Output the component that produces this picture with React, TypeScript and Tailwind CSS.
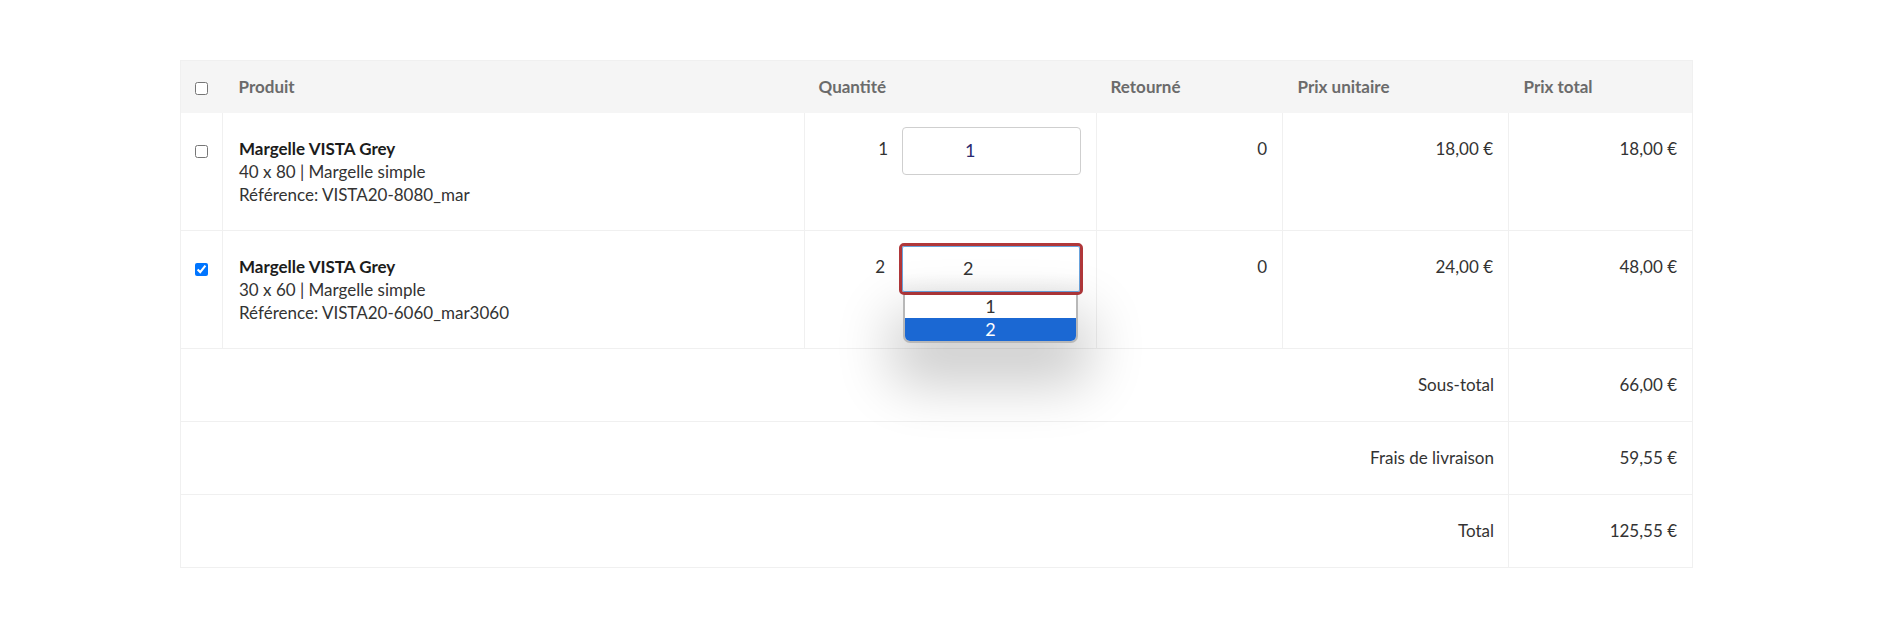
import React from 'react'

interface Line {
  id: string
  title: string
  dims: string
  reference: string
  qty: number
  returned: number
  unit: string
  total: string
  checked: boolean
}

const lines: Line[] = [
  { id: 'a', title: 'Margelle VISTA Grey', dims: '40 x 80 | Margelle simple', reference: 'Référence: VISTA20-8080_mar', qty: 1, returned: 0, unit: '18,00 €', total: '18,00 €', checked: false },
  { id: 'b', title: 'Margelle VISTA Grey', dims: '30 x 60 | Margelle simple', reference: 'Référence: VISTA20-6060_mar3060', qty: 2, returned: 0, unit: '24,00 €', total: '48,00 €', checked: true },
]

const totals = [
  { label: 'Sous-total', value: '66,00 €' },
  { label: 'Frais de livraison', value: '59,55 €' },
  { label: 'Total', value: '125,55 €' },
]

export default function App() {
  return (
    <main className="min-h-screen bg-white pt-[60px] px-[180px] text-[#222] font-['Lato',sans-serif]">
      <table className="w-[1512px] table-fixed border-collapse border border-[#f0f0f0] text-[17px]">
        <colgroup>
          <col className="w-[42px]" />
          <col className="w-[582px]" />
          <col className="w-[292px]" />
          <col className="w-[186px]" />
          <col className="w-[226px]" />
          <col className="w-[184px]" />
        </colgroup>
        <thead>
          <tr className="bg-[#f5f5f5] h-[52px] text-left text-[#6b6b6b] font-bold">
            <th className="text-center align-middle">
              <input type="checkbox" className="w-[13px] h-[13px] align-middle" />
            </th>
            <th className="px-4 font-bold">Produit</th>
            <th className="px-[14px] font-bold">Quantité</th>
            <th className="px-[14px] font-bold">Retourné</th>
            <th className="px-[15px] font-bold">Prix unitaire</th>
            <th className="px-[15px] font-bold">Prix total</th>
          </tr>
        </thead>
        <tbody>
          {lines.map(line => (
            <tr key={line.id} className="border-b border-[#f0f0f0] align-top">
              <td className="border-r border-[#f0f0f0] text-center pt-[26px]">
                <input type="checkbox" defaultChecked={line.checked} className="w-[13px] h-[13px]" />
              </td>
              <td className="border-r border-[#f0f0f0] px-4 py-6 leading-[23px]">
                <div className="font-bold text-[#1c1c1c]">{line.title}</div>
                <div className="text-[#333]">{line.dims}</div>
                <div className="text-[#333]">{line.reference}</div>
              </td>
              <td className="border-r border-[#f0f0f0] pl-3 pr-[15px] pt-[14px]">
                <div className="flex justify-end gap-[14px]">
                  <span className="leading-[23px] mt-[10px] text-[#333]">{line.qty}</span>
                  {line.checked ? (
                    <div className="relative">
                      <div className="w-[184px] h-[52px] -mt-[2px] -mr-[2px] rounded-[5px] border-[3px] border-[#b0373a] bg-white">
                        <div className="h-full rounded-[2px] border border-[#6aa3dc] bg-gradient-to-b from-white from-60% to-[#f3f3f3] pl-[60px] flex items-center text-[18px] text-[#333]">
                          {line.qty}
                        </div>
                      </div>
                      <div className="absolute left-[4px] top-[50px] w-[175px] rounded-b-[7px] border-2 border-t-0 border-[#b8b8b8] bg-white overflow-hidden shadow-[0_30px_55px_12px_rgba(0,0,0,0.2)] text-[18px] leading-[23px] text-center">
                        <div className="text-[#333]">1</div>
                        <div className="bg-[#1b68d3] text-white">2</div>
                      </div>
                    </div>
                  ) : (
                    <div className="w-[179px] h-[48px] rounded-[4px] border border-[#cfcfcf] bg-white pl-[62px] flex items-center text-[18px] text-[#2a2a70]">
                      {line.qty}
                    </div>
                  )}
                </div>
              </td>
              <td className="border-r border-[#f0f0f0] px-[15px] pt-6 leading-[23px] text-right text-[#333]">{line.returned}</td>
              <td className="border-r border-[#f0f0f0] px-[15px] pt-6 leading-[23px] text-right text-[#333]">{line.unit}</td>
              <td className="px-[15px] pt-6 leading-[23px] text-right text-[#333]">{line.total}</td>
            </tr>
          ))}
          {totals.map(t => (
            <tr key={t.label} className="border-b border-[#f0f0f0] h-[73px]">
              <td colSpan={5} className="border-r border-[#f0f0f0] px-[14px] text-right text-[#333]">{t.label}</td>
              <td className="px-[15px] text-right text-[#333]">{t.value}</td>
            </tr>
          ))}
        </tbody>
      </table>
    </main>
  )
}
